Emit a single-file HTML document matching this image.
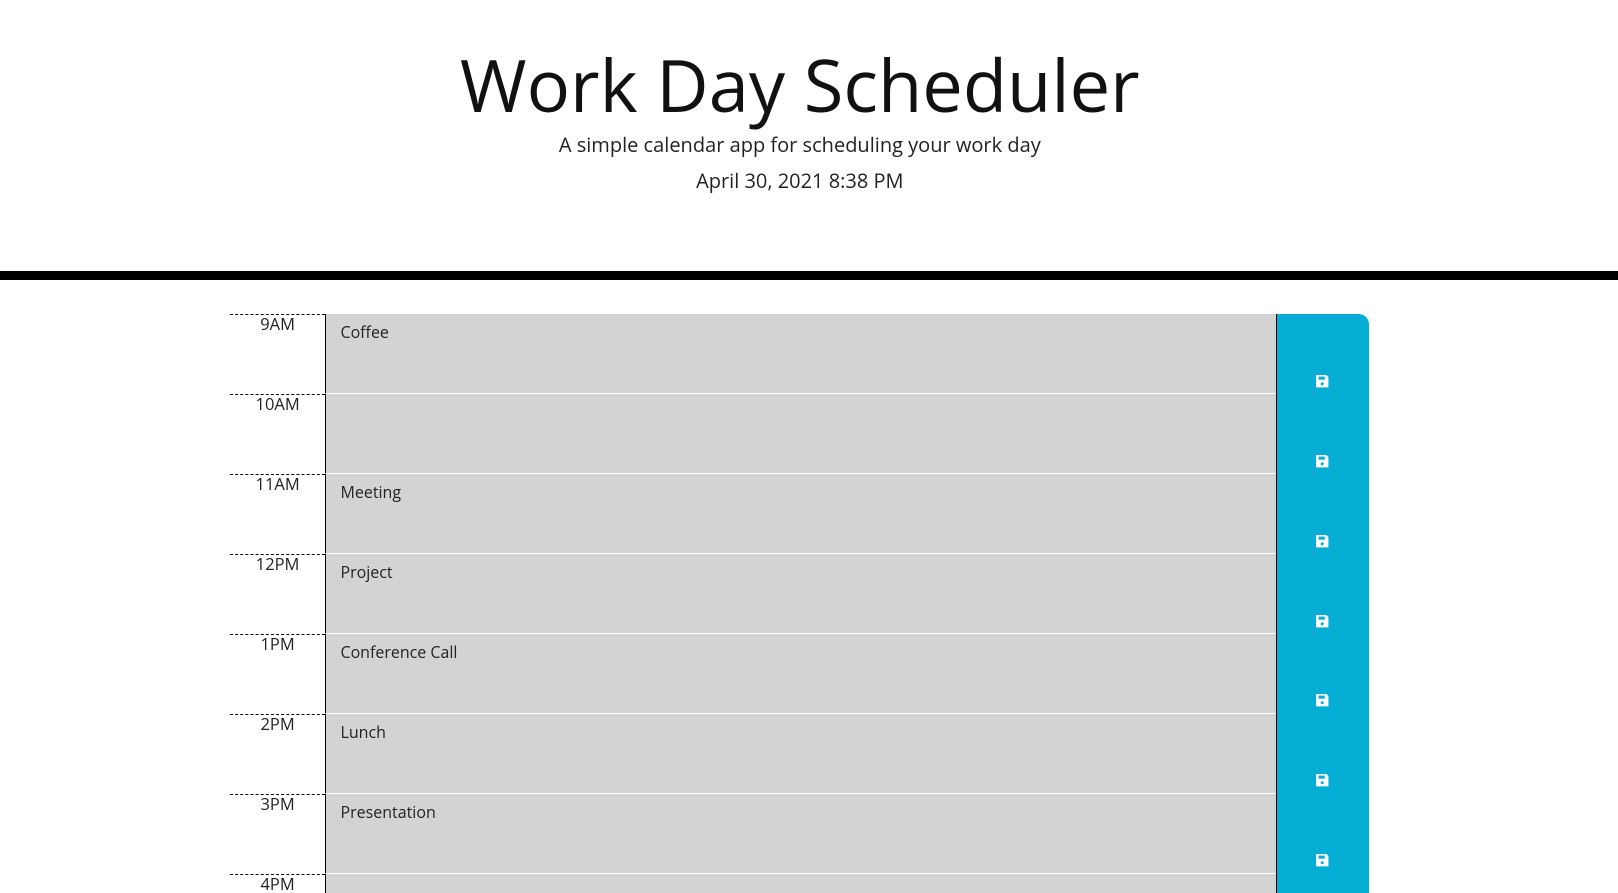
<!DOCTYPE html>
<html style="overflow:hidden;height:893px"><head><style>
body{margin:0;background:#fff;font-family:"Open Sans","Liberation Sans",sans-serif;overflow:hidden;width:1618px;height:893px}
#wrap{zoom:1.032;position:relative;width:1568px;height:865px;overflow:hidden}
header{position:absolute;left:0;top:0;width:1568px;height:263px;border-bottom:9px solid #000}
.c{position:absolute;left:0;width:1550px;text-align:center}
h1{margin:0;top:38px;font-size:70px;font-weight:400;line-height:90px;color:#111}
.sub{top:127px;font-size:19.4px;color:#222}
.date{top:162px;font-size:19.4px;color:#222}
.row{position:absolute;left:223px;height:77.5px;width:1104px}
.hr{position:absolute;left:0;top:0;width:92px;height:100%;border-top:1px dashed #000;text-align:center;font-size:16px;color:#222;box-sizing:border-box;line-height:17px}
.ta{position:absolute;left:92px;top:0;width:921px;height:100%;background:#d3d3d3;border-left:1px solid #000;border-bottom:1px solid #fff;box-sizing:border-box;padding:7px 14px;font-size:15.5px;color:#222}
.btn{position:absolute;left:1013px;top:0;width:91px;height:100%;background:#06aed5;border-left:1px solid #000;box-sizing:border-box}
.btn svg{position:absolute;left:37px;top:58px}
</style></head><body>
<div id="wrap">
<header><h1 class="c">Work Day Scheduler</h1><div class="c sub">A simple calendar app for scheduling your work day</div><div class="c date">April 30, 2021 8:38 PM</div></header>
<div id="rows"></div>
</div>
<script>
var d=[["9AM","Coffee"],["10AM",""],["11AM","Meeting"],["12PM","Project"],["1PM","Conference Call"],["2PM","Lunch"],["3PM","Presentation"],["4PM",""]];
var h="";
d.forEach(function(r,i){
var top=304+i*77.5;
h+='<div class="row" style="top:'+top+'px"><div class="hr"><span>'+r[0]+'</span></div><div class="ta">'+r[1]+'</div><div class="btn"'+(i==0?' style="border-top-right-radius:10px"':'')+'><svg width="14" height="14" viewBox="0 0 14 14"><path d="M1 1h10l2 2v10H1z" fill="#fff"/><rect x="3.5" y="2.5" width="6" height="3" fill="#06aed5"/><circle cx="7" cy="9.5" r="1.5" fill="#06aed5"/></svg></div></div>';
});
document.getElementById("rows").innerHTML=h;
</script>
</body></html>
